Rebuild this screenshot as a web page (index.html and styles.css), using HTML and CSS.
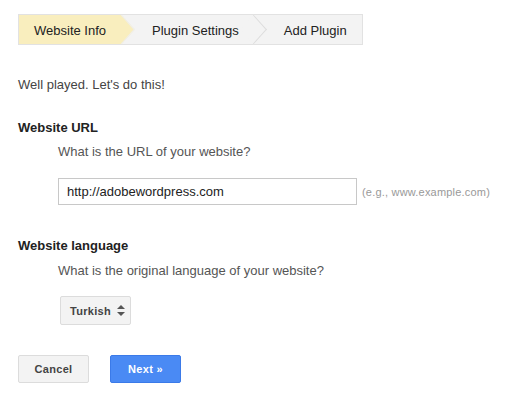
FILE: index.html
```html
<!DOCTYPE html>
<html lang="en">
<head>
    <meta charset="UTF-8">
    <title>Add Plugin - Website Info</title>
    <link rel="stylesheet" href="styles.css">
</head>
<body>
    <div class="steps">
        <div class="step active">Website Info</div>
        <div class="step">Plugin Settings</div>
        <div class="step last">Add Plugin</div>
    </div>

    <p class="intro">Well played. Let's do this!</p>

    <div class="field">
        <h3 class="field-label">Website URL</h3>
        <p class="field-question">What is the URL of your website?</p>
        <div class="field-row">
            <input type="text" class="text-input" value="http://adobewordpress.com">
            <span class="hint">(e.g., www.example.com)</span>
        </div>
    </div>

    <div class="field field-lang">
        <h3 class="field-label">Website language</h3>
        <p class="field-question">What is the original language of your website?</p>
        <div class="field-row">
            <div class="select-box">
                <span>Turkish</span>
                <svg width="8" height="11" viewBox="0 0 8 11">
                    <path d="M4 0 L8 4 L0 4 Z" fill="#555"/>
                    <path d="M0 7 L8 7 L4 11 Z" fill="#555"/>
                </svg>
            </div>
        </div>
    </div>

    <div class="actions">
        <button class="btn">Cancel</button>
        <button class="btn btn-blue">Next &raquo;</button>
    </div>
</body>
</html>
```

FILE: styles.css
```css
body {
    font-family: Arial, "Liberation Sans", sans-serif;
    font-size: 13px;
    line-height: 16px;
    color: #444;
    margin: 0;
    padding: 14px 18px;
    background: #fff;
}
p, h3 {
    margin: 0;
}

/* breadcrumb steps */
.steps {
    display: inline-flex;
    border: 1px solid #e2e2e2;
    background: #f3f3f3;
    height: 29px;
    line-height: 31px;
    color: #222;
}
.step {
    position: relative;
    padding: 0 15px 0 30px;
}
.step::after {
    content: "";
    position: absolute;
    top: 4px;
    right: -10px;
    width: 20px;
    height: 20px;
    background: #f3f3f3;
    border-top: 1px solid #dcdcdc;
    border-right: 1px solid #dcdcdc;
    transform: scaleX(0.9) rotate(45deg);
    z-index: 1;
}
.step.active {
    background: #f9eebe;
    padding-left: 15px;
    padding-right: 16px;
}
.step.active::after {
    background: #f9eebe;
    border-color: #eee;
}
.step.last::after {
    display: none;
}

.intro {
    margin-top: 32px;
}

/* form fields */
.field {
    margin-top: 27px;
}
.field-lang {
    margin-top: 33px;
}
.field-label {
    font-size: 13px;
    font-weight: bold;
    color: #222;
}
.field-question {
    margin: 8px 0 0 40px;
    color: #555;
}
.field-lang .field-question {
    margin-top: 9px;
}
.field-row {
    display: flex;
    align-items: center;
    margin: 18px 0 0 40px;
}
.field-lang .field-row {
    margin-top: 17px;
    margin-left: 42px;
}
.text-input {
    width: 299px;
    height: 27px;
    box-sizing: border-box;
    border: 1px solid #c8c8c8;
    padding: 0 8px;
    font-family: inherit;
    font-size: 13px;
    color: #222;
    outline: none;
}
.hint {
    margin-left: 5px;
    font-size: 11px;
    letter-spacing: 0.2px;
    color: #999;
}
.select-box {
    display: flex;
    align-items: center;
    gap: 6px;
    height: 29px;
    box-sizing: border-box;
    padding: 0 4px 0 9px;
    width: 71px;
    background: #f3f3f3;
    border: 1px solid #dcdcdc;
    border-radius: 2px;
    font-size: 11px;
    font-weight: bold;
    letter-spacing: 0.3px;
    color: #444;
}

/* buttons */
.actions {
    display: flex;
    gap: 21px;
    margin-top: 30px;
}
.btn {
    width: 71px;
    height: 28px;
    border: 1px solid #dcdcdc;
    border-radius: 2px;
    background: #f3f3f3;
    font-family: inherit;
    font-size: 11px;
    font-weight: bold;
    letter-spacing: 0.3px;
    color: #444;
    cursor: pointer;
}
.btn-blue {
    background: #4a8af4;
    border-color: #3b7ae8;
    color: #fff;
}
```
